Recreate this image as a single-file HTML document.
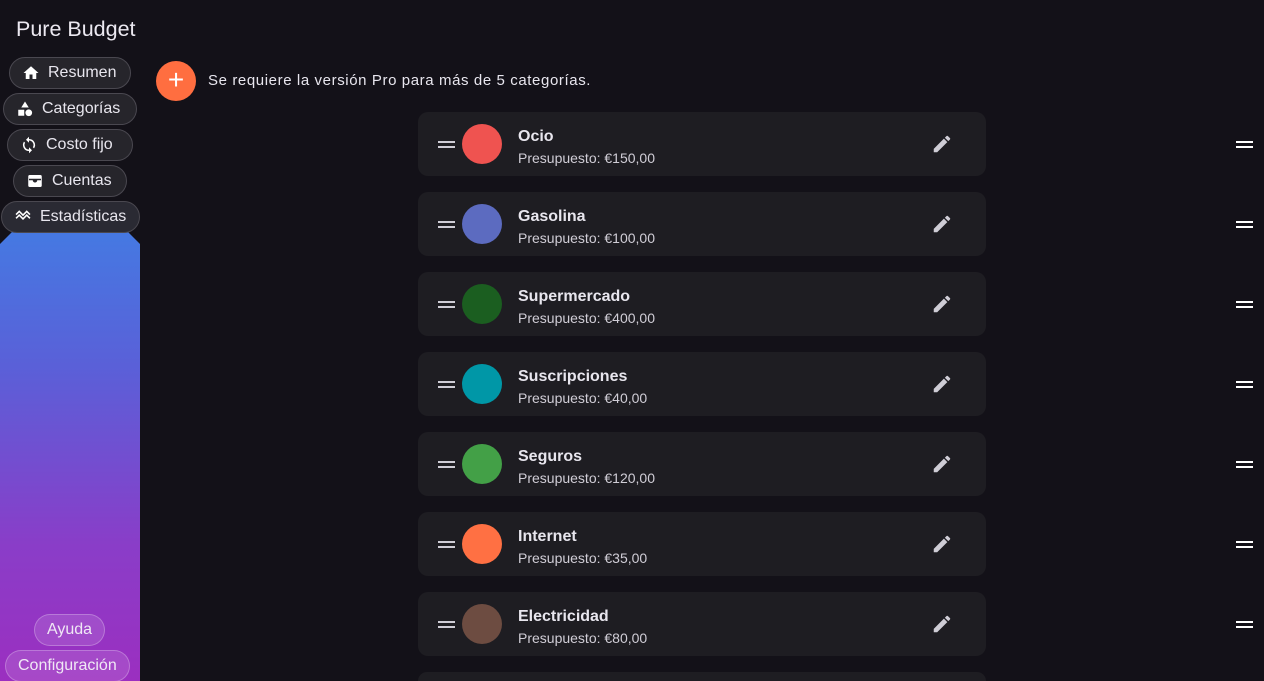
<!DOCTYPE html>
<html><head><meta charset="utf-8"><style>
*{margin:0;padding:0;box-sizing:border-box}
html,body{width:1264px;height:681px;overflow:hidden}
body{background:#131118;font-family:"Liberation Sans","DejaVu Sans",sans-serif;color:#e8e6ee;position:relative}
.title{position:absolute;left:16px;top:17px;font-size:21.5px;color:#ece9f1}
.nav{position:absolute;height:32px;border:1px solid #4a4850;background:#26252b;border-radius:16px;font-size:16px;color:#e8e6ee;display:flex;align-items:center;gap:8px;padding:0 12px}
.nav svg{width:18px;height:18px;fill:#fff}
.side{position:absolute;left:0;top:232px;width:140px;height:449px;background:linear-gradient(#4579e2,#5a60d8 30%,#8a3dc8 70%,#9b2fc0);clip-path:polygon(12px 0,128px 0,140px 12px,140px 100%,0 100%,0 12px)}
.glow{position:absolute;left:30px;top:222px;width:80px;height:20px;background:radial-gradient(#7fa6ff,transparent 70%)}
.pb{position:absolute;height:32px;border:1px solid rgba(255,255,255,.25);background:rgba(255,255,255,.12);border-radius:16px;font-size:16px;color:#f0e8f5;display:flex;align-items:center;padding:0 12px}
.fab{position:absolute;left:156px;top:61px;width:40px;height:40px;border-radius:50%;background:#ff6e40;color:#fff;font-size:28px;line-height:38px;text-align:center}
.msg{position:absolute;left:208px;top:72px;font-size:15px;letter-spacing:.6px}
.card{position:absolute;left:418px;width:568px;height:64px;background:#1e1d22;border-radius:10px}
.drag{position:absolute;left:20px;top:29px;width:17px;height:7px;border-top:2px solid #cfcdd6;border-bottom:2px solid #cfcdd6}
.dot{position:absolute;left:44px;top:12px;width:40px;height:40px;border-radius:50%}
.nm{position:absolute;left:100px;top:16px;font-size:16px;font-weight:bold}
.bd{position:absolute;left:100px;top:38px;font-size:14px;color:#d0cdd6}
.ed{position:absolute;left:513px;top:21px;width:22px;height:22px;fill:#cfcdd6}
.rd{position:absolute;left:1236px;width:17px;height:7px;border-top:2px solid #fff;border-bottom:2px solid #fff}
</style></head><body>
<div class="title">Pure Budget</div>
<div class="nav" style="left:9px;top:57px;width:122px"><svg viewBox="0 0 24 24"><path d="M10 20v-6h4v6h5v-8h3L12 3 2 12h3v8z"/></svg>Resumen</div>
<div class="nav" style="left:3px;top:93px;width:134px"><svg viewBox="0 0 24 24"><path d="M12 2l5 8H7z"/><rect x="3" y="13" width="8" height="8"/><circle cx="17" cy="17" r="4.5"/></svg>Categorías</div>
<div class="nav" style="left:7px;top:129px;width:126px"><svg viewBox="0 0 24 24"><path d="M12 4V1L8 5l4 4V6a6 6 0 015.2 9l1.5 1.5A8 8 0 0012 4zm0 14a6 6 0 01-5.2-9L5.3 7.5A8 8 0 0012 20v3l4-4-4-4z"/></svg>Costo fijo</div>
<div class="nav" style="left:13px;top:165px;width:114px"><svg viewBox="0 0 24 24"><path d="M5 4h14a2 2 0 012 2v12a2 2 0 01-2 2H5a2 2 0 01-2-2V6a2 2 0 012-2zm-1 5v2h5a3 3 0 006 0h5V9z"/></svg>Cuentas</div>
<div class="glow"></div>
<div class="side"></div>
<div class="nav" style="left:1px;top:201px;width:139px;background:#2a2a33"><svg viewBox="0 0 24 24"><path d="M2 13l5-5 5 5 5-5 5 5-1.5 1.5L17 11l-5 5-5-5-3.5 3.5z M2 8l5-5 5 5 5-5 5 5-1.5 1.5L17 6l-5 5-5-5-3.5 3.5z"/></svg>Estadísticas</div>
<div class="pb" style="left:34px;top:614px">Ayuda</div>
<div class="pb" style="left:5px;top:650px">Configuración</div>
<div class="fab">+</div>
<div class="msg">Se requiere la versión Pro para más de 5 categorías.</div>

<div class="card" style="top:112px"><div class="drag"></div><div class="dot" style="background:#ef5350"></div><div class="nm">Ocio</div><div class="bd">Presupuesto: €150,00</div><svg class="ed" viewBox="0 0 24 24"><path d="M3 17.25V21h3.75L17.8 9.94l-3.75-3.75zM20.7 7.040a1 1 0 000-1.41l-2.34-2.34a1 1 0 00-1.41 0l-1.83 1.83 3.75 3.75z"/></svg></div>
<div class="card" style="top:192px"><div class="drag"></div><div class="dot" style="background:#5c6bc0"></div><div class="nm">Gasolina</div><div class="bd">Presupuesto: €100,00</div><svg class="ed" viewBox="0 0 24 24"><path d="M3 17.25V21h3.75L17.8 9.94l-3.75-3.75zM20.7 7.04a1 1 0 000-1.41l-2.34-2.34a1 1 0 00-1.41 0l-1.83 1.83 3.75 3.75z"/></svg></div>
<div class="card" style="top:272px"><div class="drag"></div><div class="dot" style="background:#1b5e20"></div><div class="nm">Supermercado</div><div class="bd">Presupuesto: €400,00</div><svg class="ed" viewBox="0 0 24 24"><path d="M3 17.25V21h3.75L17.8 9.94l-3.75-3.75zM20.7 7.04a1 1 0 000-1.41l-2.34-2.34a1 1 0 00-1.41 0l-1.83 1.83 3.75 3.75z"/></svg></div>
<div class="card" style="top:352px"><div class="drag"></div><div class="dot" style="background:#0097a7"></div><div class="nm">Suscripciones</div><div class="bd">Presupuesto: €40,00</div><svg class="ed" viewBox="0 0 24 24"><path d="M3 17.25V21h3.75L17.8 9.94l-3.75-3.75zM20.7 7.04a1 1 0 000-1.41l-2.34-2.34a1 1 0 00-1.41 0l-1.83 1.83 3.75 3.75z"/></svg></div>
<div class="card" style="top:432px"><div class="drag"></div><div class="dot" style="background:#43a047"></div><div class="nm">Seguros</div><div class="bd">Presupuesto: €120,00</div><svg class="ed" viewBox="0 0 24 24"><path d="M3 17.25V21h3.75L17.8 9.94l-3.75-3.75zM20.7 7.04a1 1 0 000-1.41l-2.34-2.34a1 1 0 00-1.41 0l-1.83 1.83 3.75 3.75z"/></svg></div>
<div class="card" style="top:512px"><div class="drag"></div><div class="dot" style="background:#ff7043"></div><div class="nm">Internet</div><div class="bd">Presupuesto: €35,00</div><svg class="ed" viewBox="0 0 24 24"><path d="M3 17.25V21h3.75L17.8 9.94l-3.75-3.75zM20.7 7.04a1 1 0 000-1.41l-2.34-2.34a1 1 0 00-1.41 0l-1.83 1.83 3.75 3.75z"/></svg></div>
<div class="card" style="top:592px"><div class="drag"></div><div class="dot" style="background:#6d4c41"></div><div class="nm">Electricidad</div><div class="bd">Presupuesto: €80,00</div><svg class="ed" viewBox="0 0 24 24"><path d="M3 17.25V21h3.75L17.8 9.94l-3.75-3.75zM20.7 7.04a1 1 0 000-1.41l-2.34-2.34a1 1 0 00-1.41 0l-1.83 1.83 3.75 3.75z"/></svg></div>
<div class="card" style="top:672px;height:9px;border-radius:10px 10px 0 0"></div>

<div class="rd" style="top:141px"></div><div class="rd" style="top:221px"></div><div class="rd" style="top:301px"></div><div class="rd" style="top:381px"></div><div class="rd" style="top:461px"></div><div class="rd" style="top:541px"></div><div class="rd" style="top:621px"></div>
</body></html>
